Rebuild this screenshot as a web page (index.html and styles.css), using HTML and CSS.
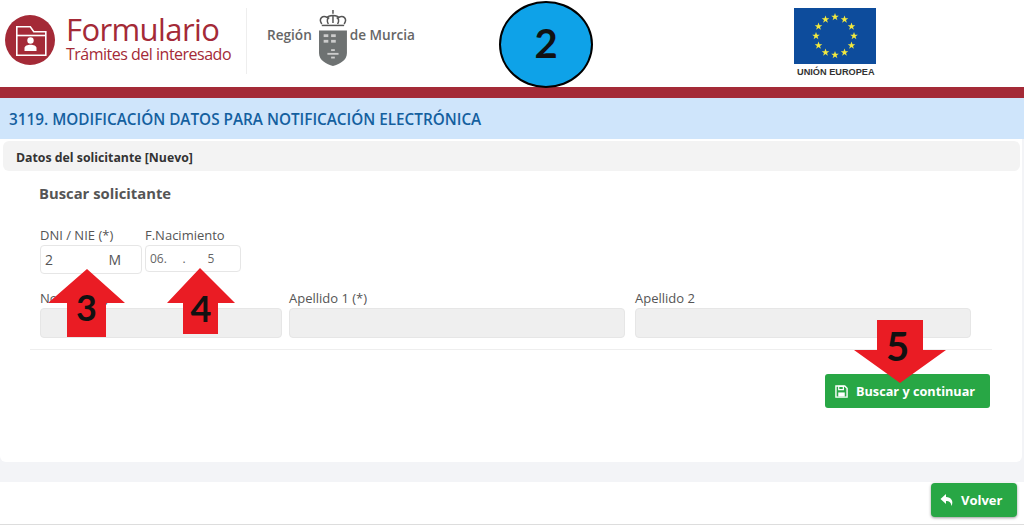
FILE: index.html
```html
<!DOCTYPE html>
<html lang="en">
<head>
    <meta charset="UTF-8">
    <title>Formulario</title>
    <link rel="stylesheet" href="styles.css">
</head>
<body>

    <header class="header">
        <div class="brand">
            <svg class="brand-icon" width="50" height="50" viewBox="0 0 50 50">
                <circle cx="25" cy="25" r="25" fill="#a42a37"/>
                <path d="M11.8 40.2V11.8h13.5l3.5 5h12v23.4z" fill="none" stroke="#fff" stroke-width="1.6"/>
                <path d="M11.8 20.5h29" stroke="#fff" stroke-width="1.6"/>
                <circle cx="25.5" cy="25.5" r="3.2" fill="#fff"/>
                <path d="M19.5 36v-3c0-4.500 12-4.500 12 0v3z" fill="#fff"/>
            </svg>
            <div class="brand-text">
                <div class="brand-title">Formulario</div>
                <div class="brand-sub">Trámites del interesado</div>
            </div>
        </div>
        <div class="region">
            <span>Región</span>
            <svg width="30" height="60" viewBox="0 0 30 60">
                <g fill="none" stroke="#555" stroke-width="1.6">
                    <path d="M3 15C-1 9 4 5 9 8c1-3 11-3 12 0 5-3 10 1 6 7"/>
                    <path d="M10 15C8 11 9 9 11 8M20 15c2-4 1-6-1-7M15 14V6M15 0v4"/>
                    <path d="M3 16.500h24"/>
                </g>
                <path d="M0 22h30v24c0 8-8 12-15 14C8 58 0 54 0 46z" fill="#6e7272"/>
                <g fill="#ccc">
                    <rect x="5" y="26" width="5" height="3"/>
                    <rect x="13" y="26" width="5" height="3"/>
                    <rect x="5" y="32" width="5" height="3"/>
                    <rect x="13" y="32" width="5" height="3"/>
                    <rect x="13" y="42" width="4" height="2"/>
                    <rect x="9" y="46" width="12" height="2"/>
                    <rect x="13" y="50" width="4" height="2"/>
                </g>
            </svg>
            <span>de Murcia</span>
        </div>
        <div class="eu">
            <svg width="82" height="56" viewBox="0 0 82 56">
                <defs>
                    <polygon id="star" points="0,-4 1,-1.200 3.800,-1.200 1.500,0.500 2.400,3.200 0,1.500 -2.400,3.200 -1.500,0.500 -3.800,-1.200 -1,-1.200" fill="#f3e93e"/>
                </defs>
                <rect width="82" height="56" fill="#0d4c9c"/>
                <use href="#star" x="41" y="9"/>
                <use href="#star" x="50.500" y="11.500"/>
                <use href="#star" x="57.500" y="18.500"/>
                <use href="#star" x="60" y="28"/>
                <use href="#star" x="57.500" y="37.500"/>
                <use href="#star" x="50.500" y="44.500"/>
                <use href="#star" x="41" y="47"/>
                <use href="#star" x="31.500" y="44.500"/>
                <use href="#star" x="24.500" y="37.500"/>
                <use href="#star" x="22" y="28"/>
                <use href="#star" x="24.500" y="18.500"/>
                <use href="#star" x="31.500" y="11.500"/>
            </svg>
            <div class="eu-label">UNIÓN EUROPEA</div>
        </div>
    </header>
    <div class="red-bar"></div>
    <div class="title-band">3119. MODIFICACIÓN DATOS PARA NOTIFICACIÓN ELECTRÓNICA</div>

    <main class="content">
        <section class="card">
            <div class="card-head">Datos del solicitante [Nuevo]</div>
            <div class="card-body">
                <h2>Buscar solicitante</h2>
                <div class="row-top">
                    <div class="field field-dni">
                        <label>DNI / NIE (*)</label>
                        <div class="input input-dni"><span>2</span><span>M</span></div>
                    </div>
                    <div class="field field-date">
                        <label>F.Nacimiento</label>
                        <div class="input input-date">06.     .       5</div>
                    </div>
                </div>
                <div class="row-names">
                    <div class="field field-name">
                        <label>Nombre (*)</label>
                        <div class="input disabled"></div>
                    </div>
                    <div class="field field-ap1">
                        <label>Apellido 1 (*)</label>
                        <div class="input disabled"></div>
                    </div>
                    <div class="field field-ap2">
                        <label>Apellido 2</label>
                        <div class="input disabled"></div>
                    </div>
                </div>
                <div class="actions">
                    <button class="btn btn-search">
                        <svg width="13" height="13" viewBox="0 0 14 14">
                            <path d="M1 1h9.500L13 3.500V13H1z" fill="none" stroke="#fff" stroke-width="1.500"/>
                            <path d="M4 1.500h5v3.500H4z" fill="none" stroke="#fff" stroke-width="1.300"/>
                            <path d="M3.500 8h7v4.500h-7z" fill="#fff"/>
                        </svg>
                        Buscar y continuar
                    </button>
                </div>
            </div>
        </section>
    </main>

    <footer class="footer">
        <button class="btn btn-back">
            <svg width="14" height="14" viewBox="0 0 14 14">
                <path d="M6 1L0.500 6 6 11V8c3 0 5 1 5.500 5C14 8 11 4 6 4z" fill="#fff"/>
            </svg>
            Volver
        </button>
    </footer>

    <div class="step-circle">2</div>
    <div class="arrow arrow-3">
        <svg width="77" height="68" viewBox="0 0 77 68"><path d="M39 0l38 34H58v34H19V34H0z" fill="#ea1c24"/></svg>
        <span>3</span>
    </div>
    <div class="arrow arrow-4">
        <svg width="68" height="66" viewBox="0 0 68 66"><path d="M33 0l35 35H51v31H16V35H0z" fill="#ea1c24"/></svg>
        <span>4</span>
    </div>
    <div class="arrow arrow-5">
        <svg width="92" height="63" viewBox="0 0 92 63"><path d="M23 0h46v30h23L46 63 0 30h23z" fill="#ea1c24"/></svg>
        <span>5</span>
    </div>

</body>
</html>
```

FILE: styles.css
```css
* {
    box-sizing: border-box;
}

body {
    font-family: "Open Sans", Arial, sans-serif;
    background-color: white;
    color: #555;
    margin: 0;
    height: 525px;
    overflow: hidden;
    position: relative;
}

.header {
    height: 87px;
    display: flex;
    align-items: flex-start;
    padding-left: 5px;
}

.brand {
    display: flex;
    gap: 11px;
    width: 242px;
    height: 66px;
    margin-top: 8px;
    padding-top: 7px;
    border-right: 1px solid #eee;
}

.brand-text {
    color: #a42a37;
}

.brand-title {
    font-size: 31px;
    line-height: 30px;
    letter-spacing: -0.6px;
    margin-top: -1px;
}

.brand-sub {
    font-size: 16px;
    letter-spacing: -0.5px;
    line-height: 18px;
    margin-top: 1px;
}

.region {
    display: flex;
    align-items: center;
    gap: 7px;
    width: 148px;
    height: 60px;
    margin: 8px 0 0 20px;
    font-size: 13.6px;
    font-weight: 600;
    color: #666;
}

.region span {
    margin-top: -7px;
    white-space: nowrap;
}

.region span:last-child {
    margin-left: -4px;
}

.eu {
    margin: 8px 0 0 379px;
    width: 82px;
}

.eu svg {
    display: block;
}

.eu-label {
    font-family: "Liberation Sans", Arial, sans-serif;
    font-size: 9.2px;
    font-weight: bold;
    color: #333;
    margin: 3px 0 0 3px;
    white-space: nowrap;
}

.red-bar {
    height: 11px;
    background-color: #a42a37;
}

.title-band {
    height: 41px;
    background-color: #cfe5fb;
    color: #14609f;
    font-size: 15.3px;
    font-weight: 600;
    line-height: 43px;
    padding-left: 9px;
}

.content {
    height: 343px;
    background-color: #f3f4f7;
    padding-right: 2px;
}

.card {
    height: 323px;
    background-color: white;
    border-radius: 0 0 6px 6px;
    padding-top: 2px;
}

.card-head {
    height: 30px;
    margin: 0 2px 0 3px;
    background-color: #f3f3f3;
    border-radius: 6px;
    color: #333;
    font-size: 12.3px;
    font-weight: 700;
    line-height: 34px;
    padding-left: 13px;
}

.card-body {
    padding: 13px 30px 0 30px;
}

h2 {
    font-size: 14.8px;
    font-weight: 700;
    color: #555;
    margin: 0 0 0 9px;
    line-height: 18px;
}

.row-top {
    display: flex;
    gap: 3px;
    margin: 26px 0 0 10px;
}

.field label {
    display: block;
    font-size: 13px;
    line-height: 14px;
    margin-bottom: 3px;
    color: #555;
}

.field-dni {
    width: 102px;
}

.field-date {
    width: 96px;
}

.input {
    border: 1px solid #e6e6e6;
    border-radius: 4px;
    background-color: white;
    display: flex;
    justify-content: space-between;
    align-items: center;
    padding: 0 4px;
    height: 29px;
    font-size: 14px;
}

.input-dni {
    padding-right: 20px;
}

.input-date {
    height: 27px;
    font-size: 12px;
    color: #666;
    white-space: pre;
}

.row-names {
    display: flex;
    gap: 7px;
    margin-top: 17px;
    padding: 0 21px 11px 10px;
    border-bottom: 1px solid #eee;
}

.field-name {
    width: 242px;
}

.field-ap1,
.field-ap2 {
    width: 336px;
}

.field-ap2 {
    margin-left: 3px;
}

.input.disabled {
    background-color: #efefef;
    height: 30px;
}

.actions {
    display: flex;
    justify-content: flex-end;
    padding: 24px 2px 0 0;
}

.btn {
    font-family: "Open Sans", Arial, sans-serif;
    background-color: #28a745;
    color: white;
    border: none;
    border-radius: 3px;
    font-weight: 700;
    display: flex;
    align-items: center;
    cursor: pointer;
}

.btn-search {
    width: 165px;
    height: 34px;
    font-size: 12.7px;
    gap: 8px;
    padding: 0 0 0 10px;
}

.footer {
    height: 43px;
    display: flex;
    justify-content: flex-end;
    border-bottom: 1px solid #ddd;
    padding: 1px 7px 0 0;
}

.btn-back {
    width: 86px;
    height: 34px;
    font-size: 13px;
    gap: 7px;
    padding: 0 0 0 9px;
    border-radius: 4px;
    box-shadow: 0 1px 3px rgba(0, 0, 0, 0.4);
}

.step-circle {
    position: absolute;
    left: 499px;
    top: 1px;
    width: 94px;
    height: 87px;
    border: 2px solid black;
    border-radius: 50%;
    background-color: #0ea2e8;
    color: #111;
    font-family: Lato, Arial, sans-serif;
    font-size: 40px;
    font-weight: 700;
    text-align: center;
    line-height: 80px;
}

.arrow {
    position: absolute;
    display: flex;
    justify-content: center;
}

.arrow svg {
    display: block;
}

.arrow span {
    position: absolute;
    color: #111;
    font-family: Lato, Arial, sans-serif;
    font-size: 36px;
    font-weight: 700;
    line-height: 40px;
}

.arrow-3 {
    left: 48px;
    top: 269px;
}

.arrow-3 span {
    top: 18px;
}

.arrow-4 {
    left: 167px;
    top: 268px;
}

.arrow-4 span {
    top: 20px;
}

.arrow-5 {
    left: 849px;
    top: 320px;
}

.arrow-5 svg {
    margin-left: 5px;
}

.arrow-5 span {
    top: 6px;
    font-size: 40px;
}
```
